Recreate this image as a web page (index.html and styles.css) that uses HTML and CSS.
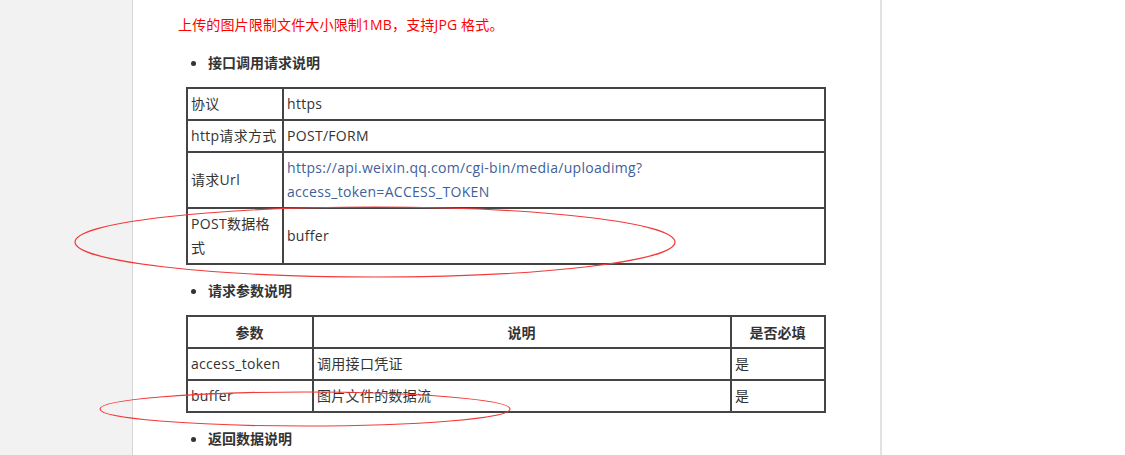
FILE: index.html
```html
<!DOCTYPE html>
<html lang="zh-CN">
<head>
<meta charset="utf-8">
<title>上传图片</title>
<link rel="stylesheet" href="styles.css">
</head>
<body>
<div class="page">
  <aside class="sidebar"></aside>
  <main class="content">
    <p class="warn">上传的图片限制文件大小限制1MB，支持JPG 格式。</p>
    <ul class="section"><li>接口调用请求说明</li></ul>
    <table class="info">
      <tr><td class="c1">协议</td><td>https</td></tr>
      <tr><td class="c1">http请求方式</td><td>POST/FORM</td></tr>
      <tr><td class="c1">请求Url</td><td><span class="link">https://api.weixin.qq.com/cgi-bin/media/uploadimg?<br>access_token=ACCESS_TOKEN</span></td></tr>
      <tr><td class="c1">POST数据格<br>式</td><td>buffer</td></tr>
    </table>
    <ul class="section"><li>请求参数说明</li></ul>
    <table class="params">
      <tr><th class="p1">参数</th><th class="p2">说明</th><th class="p3">是否必填</th></tr>
      <tr><td>access_token</td><td>调用接口凭证</td><td>是</td></tr>
      <tr><td>buffer</td><td>图片文件的数据流</td><td>是</td></tr>
    </table>
    <ul class="section"><li>返回数据说明</li></ul>
  </main>
  <div class="rest"></div>
</div>
<svg class="marks" width="1125" height="455" viewBox="0 0 1125 455">
  <ellipse cx="375" cy="242" rx="300" ry="35" fill="none" stroke="#f23a3a" stroke-width="1.2"/>
  <ellipse cx="305" cy="409" rx="205" ry="17" fill="none" stroke="#f23a3a" stroke-width="1.2"/>
</svg>
</body>
</html>
```
FILE: styles.css
```css
html, body {
  margin: 0;
  padding: 0;
  background: #fff;
  height: 455px;
  overflow: hidden;
}
body {
  font-family: "Open Sans", "Noto Sans CJK SC", sans-serif;
  font-size: 14px;
  color: #333;
  position: relative;
}
.page {
  display: flex;
  height: 455px;
}
.sidebar {
  width: 132px;
  flex: none;
  background: #f2f2f2;
  border-right: 1px solid #d6d6d6;
}
.content {
  width: 749px;
  flex: none;
  border-right: 2px solid #e2e2e2;
  padding: 13px 0 0 45px;
  box-sizing: border-box;
}
.rest {
  flex: 1;
}
.warn {
  margin: 0;
  color: #ff0000;
  line-height: 24px;
  letter-spacing: 0.15px;
}
.section {
  margin: 13px 0;
  padding-left: 30px;
  line-height: 24px;
  font-weight: bold;
  font-family: "Noto Sans CJK SC", sans-serif;
  color: #333;
}
table {
  border-collapse: collapse;
  margin-left: 8px;
}
td, th {
  border: 2px solid #444;
  padding: 3px 4px 3px 3px;
  line-height: 24px;
  text-align: left;
  vertical-align: middle;
  font-weight: normal;
  letter-spacing: 0.3px;
}
.info { width: 640px; }
.info .c1 { width: 87px; }
.link { color: #3e5f9c; }
.params { width: 640px; }
.params th {
  font-weight: bold;
  text-align: center;
  font-family: "Noto Sans CJK SC", sans-serif;
  letter-spacing: 0;
}
.p1 { width: 117px; }
.p2 { width: 409px; }
.marks {
  position: absolute;
  left: 0;
  top: 0;
  pointer-events: none;
}
```
